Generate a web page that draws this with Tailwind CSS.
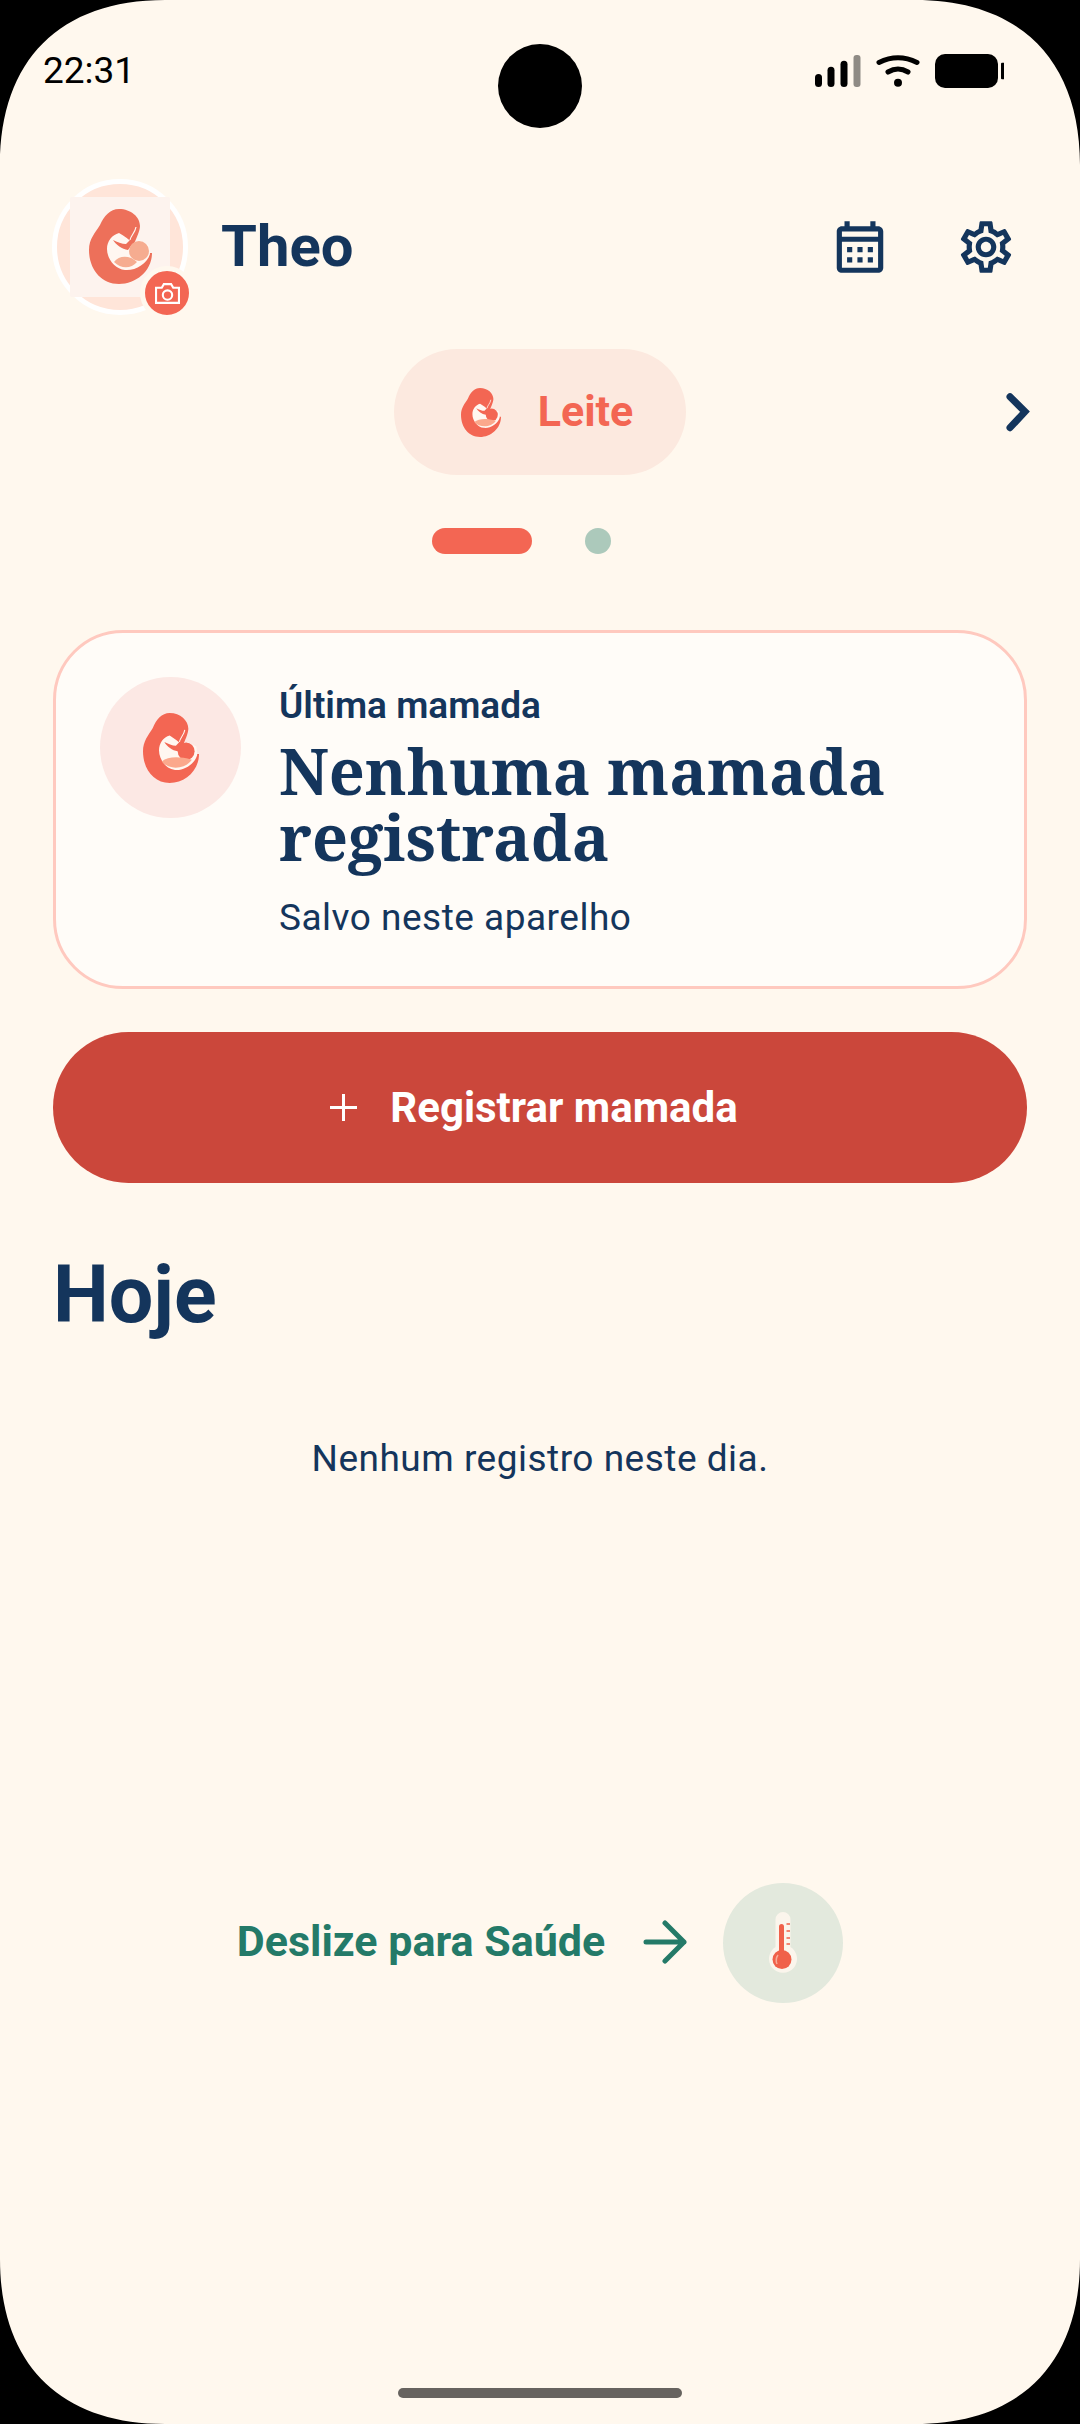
<!DOCTYPE html>
<html lang="en">
<head>
  <meta charset="UTF-8">
  <title>Theo</title>
  <script src="https://cdn.jsdelivr.net/npm/@tailwindcss/browser@4"></script>
</head>
<body class="bg-black">
  <div class="relative w-[1080px] h-[2424px] overflow-hidden bg-[#fff8ee] font-[family-name:Roboto] text-[#14355c]">

    <!-- Shared mother icon -->
    <svg class="absolute" width="0" height="0">
      <defs>
        <g id="mother">
          <path d="M30 0C42 0 51 8 51 17C51 22 47 30 44 37L56 44H63C63 62 47 75 30 75C12 75 0 60 0 41C0 30 6 24 11 16C15 7 21 0 30 0Z"/>
          <path d="M30 24C35 27 40 30 44 35L50 31L60 36L61 45C58 55 46 62 36 61C26 60 18 50 18 40C18 32 23 26 30 24Z" fill="#fff7f1"/>
          <path d="M24 31C28 33 33 35 37 35L42 30L45 33L39 41C33 40 27 36 24 31Z"/>
          <path d="M47 18C46 24 42 26 41 31" fill="none" stroke="#fff7f1" stroke-width="1.200"/>
        </g>
      </defs>
    </svg>

    <!-- Status bar -->
    <div class="flex justify-between items-start h-[179px] pl-[43px] pr-[76px] pt-[48px] text-black">
      <span class="text-[37px] leading-[46px]">22:31</span>
      <svg class="mt-[6px]" width="191" height="34" viewBox="0 0 191 34">
        <rect x="2" y="20" width="7" height="13" rx="3.5"/>
        <rect x="14.500" y="12.700" width="7" height="20.300" rx="3.500"/>
        <rect x="27.500" y="6.700" width="7" height="26.300" rx="3.500"/>
        <rect x="40.500" y="1" width="7" height="32" rx="3" fill="#8f8b85"/>
        <path d="M66 8.500Q85 -1 104 8.500" fill="none" stroke="#000" stroke-width="5" stroke-linecap="round"/>
        <path d="M75 18Q85 12 95 18" fill="none" stroke="#000" stroke-width="5" stroke-linecap="round"/>
        <circle cx="85" cy="28.700" r="4"/>
        <rect x="122" y="0" width="63" height="34" rx="10"/>
        <rect x="188" y="8.700" width="3.500" height="16.600" rx="1"/>
      </svg>
    </div>
    <div class="absolute left-[498px] top-[44px] w-[84px] h-[84px] rounded-full bg-black"></div>

    <!-- Profile header -->
    <div class="flex items-center h-[136px] pl-[52px] pr-[63px]">
      <div class="relative w-[136px] h-[136px] rounded-full border-[5px] border-white bg-[#ffe5d9] flex items-center justify-center">
        <div class="w-[100px] h-[100px] mb-[1px] rounded-[2px] bg-[#fdf3ee] flex items-center justify-center">
          <svg width="63" height="75" viewBox="0 0 63 75" fill="#ed705a">
            <use href="#mother"/>
            <circle cx="50" cy="42" r="10" fill="#f6ac90"/>
            <path d="M25 53C30 46 41 46 48 53C42 60 32 60 25 53Z" fill="#f6ac90"/>
          </svg>
        </div>
        <div class="absolute right-[-11px] bottom-[-10px] w-[54px] h-[54px] rounded-full border-[5px] border-[#fff8ee] bg-[#f36653] flex items-center justify-center">
          <svg width="25" height="21" viewBox="0 0 24 20" fill="none" stroke="#fff" stroke-width="2">
            <path d="M1 4.500H6.500L8.500 1H15.500L17.500 4.500H23V19H1Z"/>
            <circle cx="12" cy="11.500" r="4.500"/>
          </svg>
        </div>
      </div>
      <h1 class="ml-[33px] pb-[2px] text-[58px] leading-none font-bold">Theo</h1>
      <div class="ml-auto flex items-center gap-[64px]">
        <svg width="62" height="62" viewBox="0 0 24 24" fill="#14355c">
          <path d="M19 4h-1V2h-2v2H8V2H6v2H5c-1.110 0-2 .9-2 2v14c0 1.100.89 2 2 2h14c1.100 0 2-.9 2-2V6c0-1.100-.9-2-2-2zm0 16H5V10h14v10zm0-12H5V6h14v2zM9 14H7v-2h2v2zm4 0h-2v-2h2v2zm4 0h-2v-2h2v2zm-8 4H7v-2h2v2zm4 0h-2v-2h2v2zm4 0h-2v-2h2v2z"/>
        </svg>
        <svg width="62" height="62" viewBox="0 0 24 24" fill="#14355c">
          <path d="M19.430 12.980c.04-.32.07-.64.07-.98 0-.34-.03-.66-.07-.98l2.110-1.650c.19-.15.24-.42.12-.64l-2-3.460c-.09-.16-.26-.25-.44-.25-.06 0-.12.01-.17.03l-2.490 1c-.52-.4-1.080-.73-1.690-.98l-.38-2.650C14.460 2.180 14.250 2 14 2h-4c-.25 0-.46.18-.49.42l-.38 2.650c-.61.25-1.170.59-1.690.98l-2.490-1c-.06-.02-.12-.03-.18-.03-.17 0-.34.09-.43.25l-2 3.460c-.13.22-.07.49.12.64l2.110 1.650c-.04.32-.07.65-.07.98 0 .33.03.66.07.98l-2.110 1.650c-.19.15-.24.42-.12.64l2 3.460c.09.16.26.25.44.25.06 0 .12-.01.17-.03l2.490-1c.52.4 1.080.73 1.690.98l.38 2.650c.03.24.24.42.49.42h4c.25 0 .46-.18.49-.42l.38-2.650c.61-.25 1.170-.59 1.690-.98l2.490 1c.06.02.12.03.18.03.17 0 .34-.09.43-.25l2-3.460c.12-.22.07-.49-.12-.64l-2.110-1.650zm-1.980-1.710c.04.31.05.52.05.73 0 .21-.02.43-.05.73l-.14 1.130.89.7 1.080.84-.7 1.210-1.270-.51-1.040-.42-.9.68c-.43.32-.84.56-1.250.73l-1.060.43-.16 1.130-.2 1.350h-1.400l-.19-1.350-.16-1.130-1.060-.43c-.43-.18-.83-.41-1.230-.71l-.91-.7-1.060.43-1.270.51-.7-1.210 1.080-.84.89-.7-.14-1.130c-.03-.31-.05-.54-.05-.74s.02-.43.05-.73l.14-1.130-.89-.7-1.080-.84.7-1.210 1.270.51 1.040.42.9-.68c.43-.32.84-.56 1.250-.73l1.060-.43.16-1.130.2-1.350h1.390l.19 1.350.16 1.130 1.060.43c.43.18.83.41 1.230.71l.91.7 1.060-.43 1.270-.51.7 1.210-1.070.85-.89.7.14 1.130zM12 8c-2.210 0-4 1.790-4 4s1.790 4 4 4 4-1.790 4-4-1.790-4-4-4zm0 6c-1.100 0-2-.9-2-2s.9-2 2-2 2 .9 2 2-.9 2-2 2z"/>
        </svg>
      </div>
    </div>

    <!-- Category tabs -->
    <div class="relative mt-[34px] flex justify-center">
      <div class="w-[292px] h-[126px] pl-[14px] rounded-full bg-[#fce9df] flex items-center justify-center gap-[37px] text-[#f36653]">
        <svg width="40" height="49" viewBox="0 0 63 75" preserveAspectRatio="none" fill="#f36653">
          <use href="#mother"/>
          <circle cx="48.500" cy="41" r="9.500"/>
          <path d="M21 52C28 47 39 46 55 50C48 60 30 62 21 52Z" fill="#fba88c"/>
        </svg>
        <span class="pb-[2px] text-[43px] leading-none font-bold">Leite</span>
      </div>
      <svg class="absolute right-[46px] top-[42px]" width="34" height="42" viewBox="0 0 34 42" fill="none" stroke="#14355c" stroke-width="7" stroke-linecap="round">
        <path d="M10 5.700L25 20.700L10 36.700"/>
      </svg>
    </div>

    <!-- Page dots -->
    <div class="mt-[53px] flex justify-center gap-[53px] pr-[37px]">
      <div class="w-[100px] h-[26px] rounded-full bg-[#f36653]"></div>
      <div class="w-[26px] h-[26px] rounded-full bg-[#acc9bb]"></div>
    </div>

    <main class="px-[53px]">
      <!-- Last feed card -->
      <section class="mt-[76px] h-[359px] rounded-[70px] border-[3px] border-[#ffc9bf] bg-[#fffcf8] pl-[44px] pt-[44px] flex gap-[38px]">
        <div class="w-[141px] h-[141px] shrink-0 rounded-full bg-[#fce8e4] flex items-center justify-center">
          <svg width="56" height="70" viewBox="0 0 63 75" preserveAspectRatio="none" fill="#f36653">
            <use href="#mother"/>
            <circle cx="48.500" cy="41" r="9.500"/>
            <path d="M21 52C28 47 39 46 55 50C48 60 30 62 21 52Z" fill="#fba88c"/>
          </svg>
        </div>
        <div class="pt-[8px]">
          <p class="text-[37px] leading-[42px] font-semibold">Última mamada</p>
          <h2 class="mt-[11px] font-[family-name:'Noto_Serif','DejaVu_Serif',serif] text-[63px] leading-[66px] font-bold">Nenhuma mamada<br>registrada</h2>
          <p class="mt-[25px] text-[37px] leading-[46px] tracking-[0.5px]">Salvo neste aparelho</p>
        </div>
      </section>

      <!-- Register button -->
      <button class="mt-[43px] w-full h-[151px] pr-[12px] rounded-full bg-[#cb473b] text-white flex items-center justify-center gap-[33px]">
        <svg width="27" height="27" viewBox="0 0 27 27" stroke="#fff" stroke-width="3"><path d="M13.500 0V27M0 13.500H27"/></svg>
        <span class="text-[42px] leading-none font-bold">Registrar mamada</span>
      </button>

      <h2 class="mt-[66px] text-[79px] leading-[92px] font-bold">Hoje</h2>
      <p class="mt-[95px] text-center text-[37px] leading-[46px] tracking-[0.5px]">Nenhum registro neste dia.</p>
    </main>

    <!-- Swipe hint -->
    <div class="mt-[401px] flex items-center justify-center text-[#247a68]">
      <span class="pb-[3px] text-[43px] leading-none font-bold">Deslize para Saúde</span>
      <svg class="ml-[38px] mb-[2px]" width="44" height="44" viewBox="0 0 44 44" fill="none" stroke="#247a68" stroke-width="5" stroke-linecap="round" stroke-linejoin="round">
        <path d="M3 22H41M22 3L41 22L22 41"/>
      </svg>
      <div class="ml-[36px] w-[120px] h-[120px] rounded-full bg-[#e3e9dd] flex items-center justify-center">
        <svg width="30" height="62" viewBox="0 0 30 62">
          <path d="M7.500 7.500a7.500 7.500 0 0 1 15 0V35a14 14 0 1 1-15 0Z" fill="#fbf5ec"/>
          <rect x="11" y="12" width="5" height="36" rx="2.500" fill="#f0614a"/>
          <circle cx="14" cy="47.500" r="9.500" fill="#f0614a"/>
          <path d="M9 52Q7 47 10 43" fill="none" stroke="#f7ab98" stroke-width="1.500"/>
          <path d="M18.500 12H22M18.500 19H22M18.500 26H22M18.500 32H22" stroke="#f0614a" stroke-width="1.500"/>
        </svg>
      </div>
    </div>

    <!-- Home indicator -->
    <div class="absolute left-[398px] top-[2388px] w-[284px] h-[10px] rounded-full bg-[#67635f]"></div>

    <!-- Device corners -->
    <svg class="absolute inset-0 pointer-events-none" width="1080" height="2424" viewBox="0 0 1080 2424">
      <path fill-rule="evenodd" d="M0 0H1080V2424H0ZM165 0C60 0 0 60 0 165V2259C0 2364 60 2424 165 2424H915C1020 2424 1080 2364 1080 2259V165C1080 60 1020 0 915 0Z"/>
    </svg>
  </div>
</body>
</html>
